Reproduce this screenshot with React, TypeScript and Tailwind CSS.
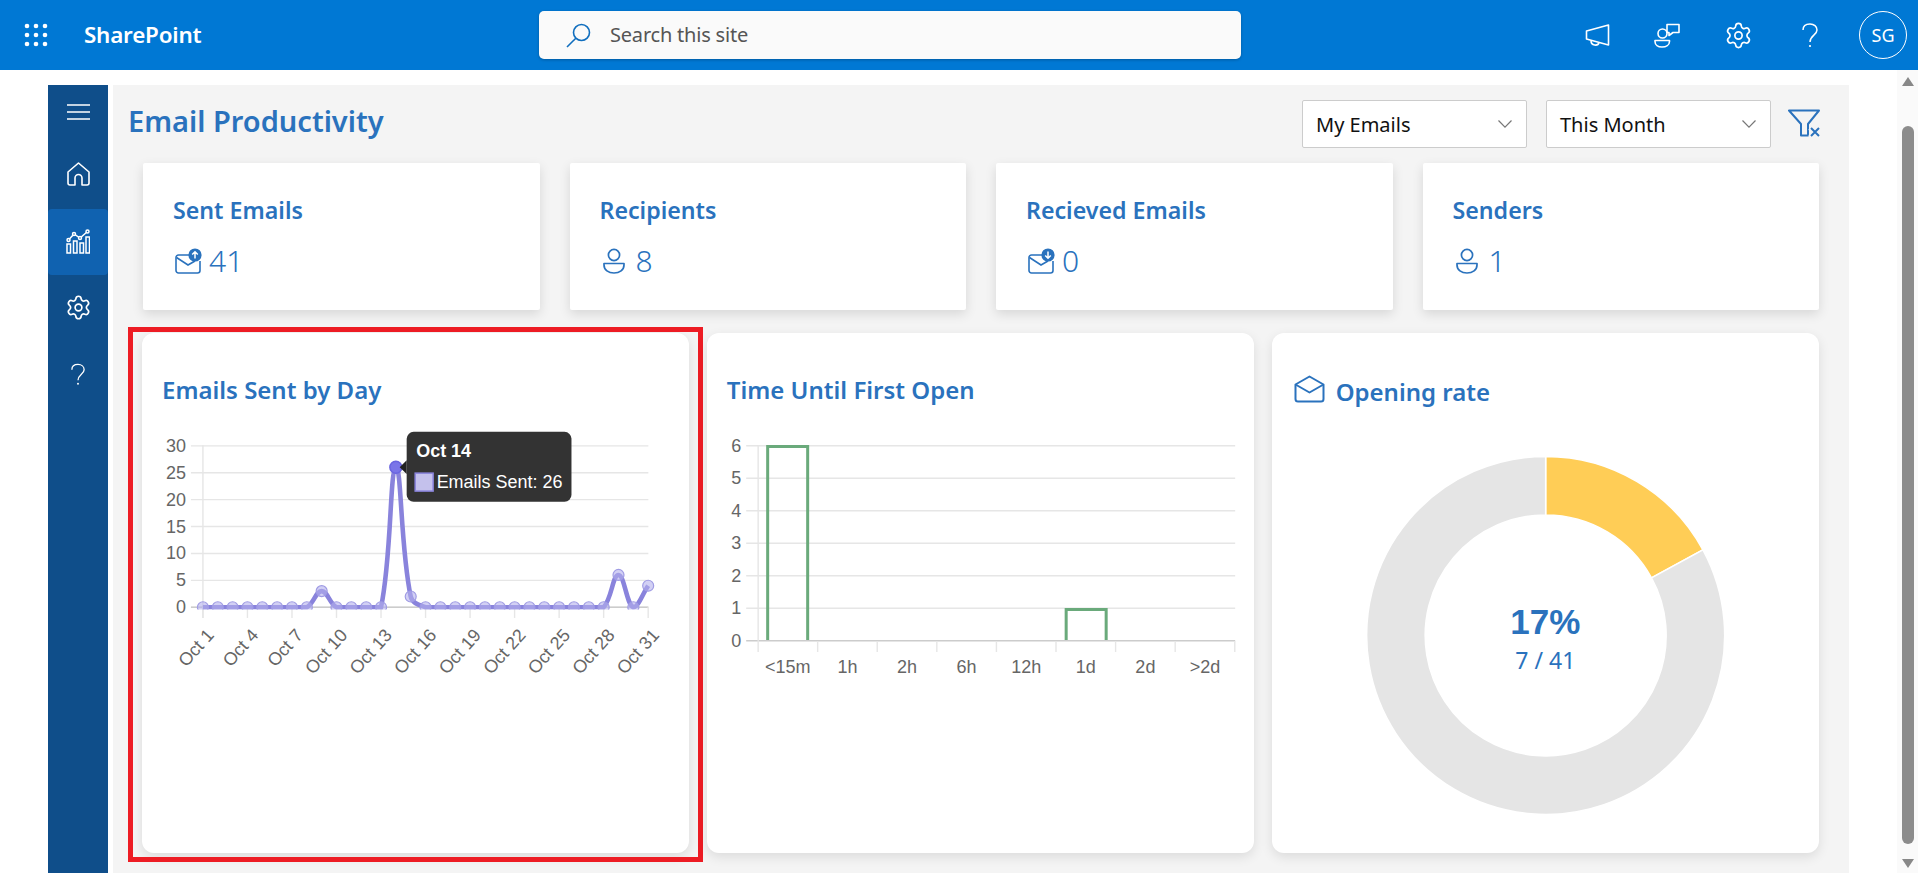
import React from "react";
import { Settings } from "lucide-react";

const BLUE = "#2a72bd";
const pts = Array.from({ length: 31 }, (_, i) => {
  const v: Record<number, number> = { 8: 3, 13: 26, 14: 2, 28: 6, 30: 4 };
  return { x: 203 + i * 14.86, y: 607.3 - (v[i] || 0) * 5.39 };
});

function splinePath() {
  const t = 0.4;
  const clamp = (y: number) => Math.min(607.3, Math.max(445.7, y));
  let d = `M${pts[0].x} ${pts[0].y}`;
  const cp = pts.map((p, i) => {
    const a = pts[Math.max(0, i - 1)];
    const b = pts[Math.min(pts.length - 1, i + 1)];
    const d01 = Math.hypot(p.x - a.x, p.y - a.y);
    const d12 = Math.hypot(b.x - p.x, b.y - p.y);
    const s = d01 + d12 || 1;
    const fa = (t * d01) / s;
    const fb = (t * d12) / s;
    return {
      px: p.x - fa * (b.x - a.x),
      py: clamp(p.y - fa * (b.y - a.y)),
      nx: p.x + fb * (b.x - a.x),
      ny: clamp(p.y + fb * (b.y - a.y)),
    };
  });
  for (let i = 1; i < pts.length; i++) {
    d += ` C${cp[i - 1].nx} ${cp[i - 1].ny} ${cp[i].px} ${cp[i].py} ${pts[i].x} ${pts[i].y}`;
  }
  return d;
}

function polar(r: number, a: number) {
  const rad = (a * Math.PI) / 180;
  return [1545.5 + r * Math.sin(rad), 635.4 - r * Math.cos(rad)];
}
function arc(a0: number, a1: number) {
  const R = 179;
  const r = 120.5;
  const [x0, y0] = polar(R, a0);
  const [x1, y1] = polar(R, a1);
  const [x2, y2] = polar(r, a1);
  const [x3, y3] = polar(r, a0);
  const large = a1 - a0 > 180 ? 1 : 0;
  return `M${x0} ${y0} A${R} ${R} 0 ${large} 1 ${x1} ${y1} L${x2} ${y2} A${r} ${r} 0 ${large} 0 ${x3} ${y3} Z`;
}

const Waffle = () => (
  <svg width="24" height="24" viewBox="0 0 24 24" fill="white">
    {[3, 12, 21].map((y) => [3, 12, 21].map((x) => <circle key={`${x}${y}`} cx={x} cy={y} r="2.3" />))}
  </svg>
);

const Person = () => (
  <svg width="24" height="26" viewBox="0 0 24 26" fill="none" stroke={BLUE} strokeWidth="1.7">
    <circle cx="12" cy="7" r="5.6" />
    <path d="M2 15.5 H22 V17 C22 22 17.5 25 12 25 C6.5 25 2 22 2 17 Z" strokeLinejoin="round" />
  </svg>
);

const MailBadge = ({ down }: { down?: boolean }) => (
  <svg width="28" height="26" viewBox="0 0 28 26" fill="none">
    <path d="M16 7 H3.5 A2.5 2.5 0 0 0 1 9.5 V22.5 A2.5 2.5 0 0 0 3.5 25 H22.5 A2.5 2.5 0 0 0 25 22.5 V13" stroke={BLUE} strokeWidth="1.6" />
    <path d="M1.5 9.5 L13 17 L20 13" stroke={BLUE} strokeWidth="1.6" />
    <circle cx="20" cy="7" r="6.6" fill={BLUE} />
    {down ? (
      <path d="M20 3.5 V10 M17.2 7.5 L20 10.3 L22.8 7.5" stroke="white" strokeWidth="1.5" />
    ) : (
      <path d="M20 10.5 V4 M17.2 6.5 L20 3.7 L22.8 6.5" stroke="white" strokeWidth="1.5" />
    )}
  </svg>
);

const Chevron = () => (
  <svg width="16" height="10" viewBox="0 0 16 10" fill="none" stroke="#777" strokeWidth="1.2">
    <path d="M1.5 1.5 L8 8.2 L14.5 1.5" />
  </svg>
);

const Select = ({ label }: { label: string }) => (
  <div className="flex h-[48px] w-[225px] items-center justify-between rounded-[2px] border border-[#ccc] bg-white pl-[13px] pr-[13px] text-[20px] text-[#111]">
    <span className="pt-[2px]">{label}</span>
    <Chevron />
  </div>
);

const Kpi = ({ title, value, icon, gap }: { title: string; value: string; icon: React.ReactNode; gap: string }) => (
  <div className="h-[147px] rounded-[2px] bg-white pl-[30px] pt-[31px] shadow-[0_4px_12px_rgba(0,0,0,0.12)]">
    <div className="text-[23.2px] font-semibold leading-[32px] text-[#2a72bd]">{title}</div>
    <div className={`ml-[2px] mt-[15px] flex items-center ${gap} text-[30px] font-light leading-[40px] text-[#2a72bd]`}>
      {icon}
      <span>{value}</span>
    </div>
  </div>
);

const ChartCard = ({ children, className }: { children: React.ReactNode; className?: string }) => (
  <div className={`relative h-[520px] rounded-[12px] bg-white shadow-[0_4px_12px_rgba(0,0,0,0.1)] ${className || ""}`}>{children}</div>
);

const Title = ({ children, opening }: { children: React.ReactNode; opening?: boolean }) => (
  <div className={`h-[87px] text-[24px] font-semibold leading-[32px] text-[#2a72bd] ${opening ? "pl-[22px] pt-[43px]" : "pl-[20px] pt-[41px]"}`}>{children}</div>
);

const AXIS = { fontFamily: "'Liberation Sans', Arial, sans-serif", fill: "#666", fontSize: 18 } as const;

function LineChart() {
  const ys = [0, 5, 10, 15, 20, 25, 30];
  const xs = Array.from({ length: 11 }, (_, i) => i * 3);
  return (
    <svg className="block w-full" height="300" viewBox="142 420 548 300">
      <defs>
        <clipPath id="lc">
          <rect x="180" y="430" width="500" height="179.5" />
        </clipPath>
      </defs>
      {ys.map((v) => {
        const y = 607.3 - v * 5.387;
        return (
          <g key={v}>
            <line x1="191" x2="649" y1={y} y2={y} stroke="#e6e6e6" strokeWidth="1.4" />
            <text x="186" y={y + 6} textAnchor="end" {...AXIS}>{v}</text>
          </g>
        );
      })}
      <line x1="203" x2="203" y1="445" y2="618" stroke="#e6e6e6" strokeWidth="1.4" />
      <line x1="191" x2="649" y1="607.3" y2="607.3" stroke="#ccc" strokeWidth="1.4" />
      {xs.map((i) => {
        const x = 203 + i * 14.86;
        return (
          <g key={i}>
            <line x1={x} x2={x} y1="607" y2="618" stroke="#e6e6e6" strokeWidth="1.4" />
            <text x={x + 12} y="636" textAnchor="end" transform={`rotate(-48 ${x + 12} 636)`} {...AXIS}>{`Oct ${i + 1}`}</text>
          </g>
        );
      })}
      <g clipPath="url(#lc)">
        <path d={splinePath()} fill="none" stroke="#8983dc" strokeWidth="4.6" />
        {pts.map((p, i) =>
          i === 13 ? null : <circle key={i} cx={p.x} cy={p.y} r="5.5" fill="#b4b1ec" fillOpacity="0.6" stroke="#a09ce4" strokeWidth="1.2" />
        )}
      </g>
      <circle cx={pts[13].x} cy={pts[13].y} r="6" fill="#7a75e8" stroke="#6a65e0" strokeWidth="1.5" />
      <path d="M400 467 L407 460 V474 Z" fill="#222" />
      <rect x="407" y="431.7" width="165" height="70" rx="7" fill="#333" />
      <text x="416.5" y="456.5" fontWeight="700" fontFamily="'Liberation Sans', Arial, sans-serif" fontSize="18" fill="#fff">Oct 14</text>
      <rect x="415.5" y="473" width="18" height="18" fill="#c4c1ec" stroke="#8983dc" strokeWidth="1.5" />
      <text x="437" y="487.5" fontFamily="'Liberation Sans', Arial, sans-serif" fontSize="18" fill="#fff">Emails Sent: 26</text>
    </svg>
  );
}

function BarChart() {
  const step = (1234.6 - 757.9) / 8;
  const labels = ["<15m", "1h", "2h", "6h", "12h", "1d", "2d", ">2d"];
  return (
    <svg className="block w-full" height="300" viewBox="707 420 547 300">
      {[0, 1, 2, 3, 4, 5, 6].map((v) => {
        const y = 640.7 - v * 32.5;
        return (
          <g key={v}>
            <line x1="746" x2="1235" y1={y} y2={y} stroke={v === 0 ? "#ccc" : "#e6e6e6"} strokeWidth="1.4" />
            <text x="741" y={y + 6} textAnchor="end" {...AXIS}>{v}</text>
          </g>
        );
      })}
      <line x1="758" x2="758" y1="445" y2="652" stroke="#e6e6e6" strokeWidth="1.4" />
      {labels.map((l, i) => (
        <g key={l}>
          <line x1={757.9 + (i + 1) * step} x2={757.9 + (i + 1) * step} y1="641" y2="652" stroke="#e6e6e6" strokeWidth="1.4" />
          <text x={757.9 + (i + 0.5) * step} y="673" textAnchor="middle" {...AXIS}>{l}</text>
        </g>
      ))}
      <path d="M767.5 640 V446.5 H807.5 V640" fill="none" stroke="#6aaa7b" strokeWidth="3" />
      <path d="M1066 640 V609.5 H1106 V640" fill="none" stroke="#6aaa7b" strokeWidth="3" />
    </svg>
  );
}

function Donut() {
  const a = (7 / 41) * 360;
  return (
    <div className="relative">
      <svg className="block w-full" height="420" viewBox="1272 420 547 420">
        <path d={arc(0, a)} fill="#ffcd56" stroke="#fff" strokeWidth="1.5" />
        <path d={arc(a, 360)} fill="#e5e5e5" stroke="#fff" strokeWidth="1.5" />
      </svg>
      <div className="absolute left-0 right-0 top-[180px] flex flex-col items-center text-[#2a72bd]">
        <div className="font-['Liberation_Sans'] text-[35px] font-bold leading-[44px]">17%</div>
        <div className="mt-[1px] text-[23px] leading-[30px]">7 / 41</div>
      </div>
    </div>
  );
}

export default function App() {
  return (
    <div className="relative h-[873px] w-full overflow-hidden bg-white font-['Noto_Sans',sans-serif]">
      <header className="flex h-[70px] items-center bg-[#0078d4] text-white">
        <div className="ml-[24px] flex w-[60px]"><Waffle /></div>
        <div className="w-[455px] text-[22.4px] font-semibold tracking-[-0.2px]">SharePoint</div>
        <div className="flex h-[48px] w-[702px] items-center rounded-[5px] bg-[#fafafa] pl-[27px] shadow-[0_1px_3px_rgba(0,0,0,0.25)]">
          <svg width="25" height="25" viewBox="0 0 25 25" fill="none" stroke="#106ebe" strokeWidth="1.6">
            <circle cx="15.5" cy="9.5" r="8" />
            <path d="M9.8 15.2 L1 24" />
          </svg>
          <span className="ml-[19px] text-[20px] tracking-[-0.2px] text-[#555]">Search this site</span>
        </div>
        <div className="ml-auto flex items-center pr-[11px]">
          <svg width="26" height="24" viewBox="0 0 26 24" fill="none" stroke="white" strokeWidth="1.6" strokeLinejoin="round">
            <path d="M1.5 8 L23.5 2 V22 L1.5 16 Z" />
            <path d="M6 17.5 C6 23 13 23.5 14 19.5" />
          </svg>
          <svg className="ml-[43px]" width="26" height="25" viewBox="0 0 26 25" fill="none" stroke="white" strokeWidth="1.6" strokeLinejoin="round">
            <circle cx="8.5" cy="10.5" r="4.5" />
            <path d="M1 17.5 H15.5 V18.5 C15.5 22 12 24 8 24 C4 24 1 22 1 18.5 Z" />
            <path d="M13 1.5 H25 V9.5 H19 L15 12.5 V9.5 H13 Z" />
          </svg>
          <Settings className="ml-[44px]" size={29} strokeWidth={1.4} />
          <svg className="ml-[49px]" width="16" height="25" viewBox="0 0 16 25" fill="none" stroke="white" strokeWidth="1.5">
            <path d="M1 7 C1 3 4 1 8 1 C12 1 15 3.5 15 7 C15 12 8 12.5 8 19" />
            <circle cx="8" cy="23" r="1.1" fill="white" stroke="none" />
          </svg>
          <div className="ml-[41px] flex h-[48px] w-[48px] items-center justify-center rounded-full border border-white text-[18px]">SG</div>
        </div>
      </header>

      <div className="flex pl-[48px] pt-[15px]">
        <nav className="flex h-[788px] w-[60px] flex-col items-center bg-[#0f4e8a] text-white">
          <div className="flex h-[54px] w-full items-center justify-center">
            <svg width="23" height="16" viewBox="0 0 23 16" stroke="white" strokeWidth="1.4">
              <path d="M0 1 H23 M0 8 H23 M0 15 H23" />
            </svg>
          </div>
          <div className="flex h-[70px] w-full items-center justify-center">
            <svg width="23" height="24" viewBox="0 0 23 24" fill="none" stroke="white" strokeWidth="1.6" strokeLinejoin="round">
              <path d="M1 10 L11.5 1 L22 10 V21 A2 2 0 0 1 20 23 H15 V16 A3.5 3.5 0 0 0 8 16 V23 H3 A2 2 0 0 1 1 21 Z" />
            </svg>
          </div>
          <div className="flex h-[66px] w-full items-center justify-center rounded-[4px] bg-[#1062b0] pb-[2px]">
            <svg width="24" height="25" viewBox="0 0 24 25" fill="none" stroke="white" strokeWidth="1.5">
              <path d="M1 15 H4.5 V24 H1 Z M7.5 12 H11 V24 H7.5 Z M14 14 H17.5 V24 H14 Z M20 8 H23.5 V24 H20 Z" />
              <path d="M2.5 11 L8 5 L14 9 L21.5 2.5" />
              <circle cx="2.5" cy="11" r="1.5" fill="#1062b0" />
              <circle cx="8" cy="5" r="1.5" fill="#1062b0" />
              <circle cx="14" cy="9" r="1.5" fill="#1062b0" />
              <circle cx="21.5" cy="2.5" r="1.5" fill="#1062b0" />
            </svg>
          </div>
          <div className="flex h-[66px] w-full items-center justify-center pb-[2px]">
            <Settings size={27} strokeWidth={1.5} />
          </div>
          <div className="flex h-[66px] w-full items-center justify-center">
            <svg width="14" height="23" viewBox="0 0 16 25" fill="none" stroke="white" strokeWidth="1.5">
              <path d="M1 7 C1 3 4 1 8 1 C12 1 15 3.5 15 7 C15 12 8 12.5 8 19" />
              <circle cx="8" cy="23" r="1.1" fill="white" stroke="none" />
            </svg>
          </div>
        </nav>

        <main className="ml-[5px] h-[788px] w-[1736px] bg-[#f4f4f4]">
          <div className="flex h-[78px] items-start pl-[15px] pr-[29px]">
            <h1 className="mt-[16px] text-[29px] font-semibold leading-[40px] text-[#2a72bd]">Email Productivity</h1>
            <div className="ml-auto mt-[15px] flex items-start">
              <div className="flex gap-[19px]">
                <Select label="My Emails" />
                <Select label="This Month" />
              </div>
              <svg className="ml-[17px] mt-[9px]" width="32" height="28" viewBox="0 0 32 28" fill="none" stroke="#2a72bd" strokeWidth="2">
                <path d="M1 1.5 H31 L20 15 V26.5 H13 V15 Z" strokeLinejoin="round" />
                <path d="M22 19 L32 28 M32 19 L22 28" fill="none" stroke="#f4f4f4" strokeWidth="5" />
                <path d="M23 19 L31 27 M31 19 L23 27" />
              </svg>
            </div>
          </div>
          <div className="grid grid-cols-4 gap-[30px] pl-[30px] pr-[30px]">
            <Kpi title="Sent Emails" value="41" gap="gap-[6px]" icon={<MailBadge />} />
            <Kpi title="Recipients" value="8" gap="gap-[10px]" icon={<Person />} />
            <Kpi title="Recieved Emails" value="0" gap="gap-[6px]" icon={<MailBadge down />} />
            <Kpi title="Senders" value="1" gap="gap-[10px]" icon={<Person />} />
          </div>
          <div className="mt-[23px] grid grid-cols-3 gap-[17.5px] pl-[29px] pr-[30px]">
            <ChartCard>
              <Title>Emails Sent by Day</Title>
              <LineChart />
              <div className="absolute -bottom-[9px] -left-[14px] -right-[13.6px] -top-[6px] border-[5px] border-[#ed1c24]" />
            </ChartCard>
            <ChartCard>
              <Title>Time Until First Open</Title>
              <BarChart />
            </ChartCard>
            <ChartCard>
              <Title opening>
                <span className="flex items-center gap-[11px]">
                  <svg className="-mt-[6px]" width="31" height="28" viewBox="0 0 31 28" fill="none" stroke="#2a72bd" strokeWidth="2" strokeLinejoin="round">
                    <path d="M1.5 9.5 L15.5 1.5 L29.5 9.5 V24 A2.5 2.5 0 0 1 27 26.5 H4 A2.5 2.5 0 0 1 1.5 24 Z" />
                    <path d="M1.5 9.5 L15.5 17.5 L29.5 9.5" />
                  </svg>
                  <span>Opening rate</span>
                </span>
              </Title>
              <Donut />
            </ChartCard>
          </div>
        </main>

        <div className="ml-auto flex h-[803px] w-[21px] -mt-[15px] flex-col items-center bg-[#fafafa] pt-[7px]">
          <div className="h-0 w-0 border-x-[6px] border-b-[9px] border-x-transparent border-b-[#888]" />
          <div className="mt-[40px] h-[718px] w-[12px] rounded-full bg-[#8c8c8c]" />
          <div className="mt-[15px] h-0 w-0 border-x-[6px] border-t-[9px] border-x-transparent border-t-[#888]" />
        </div>
      </div>
    </div>
  );
}
